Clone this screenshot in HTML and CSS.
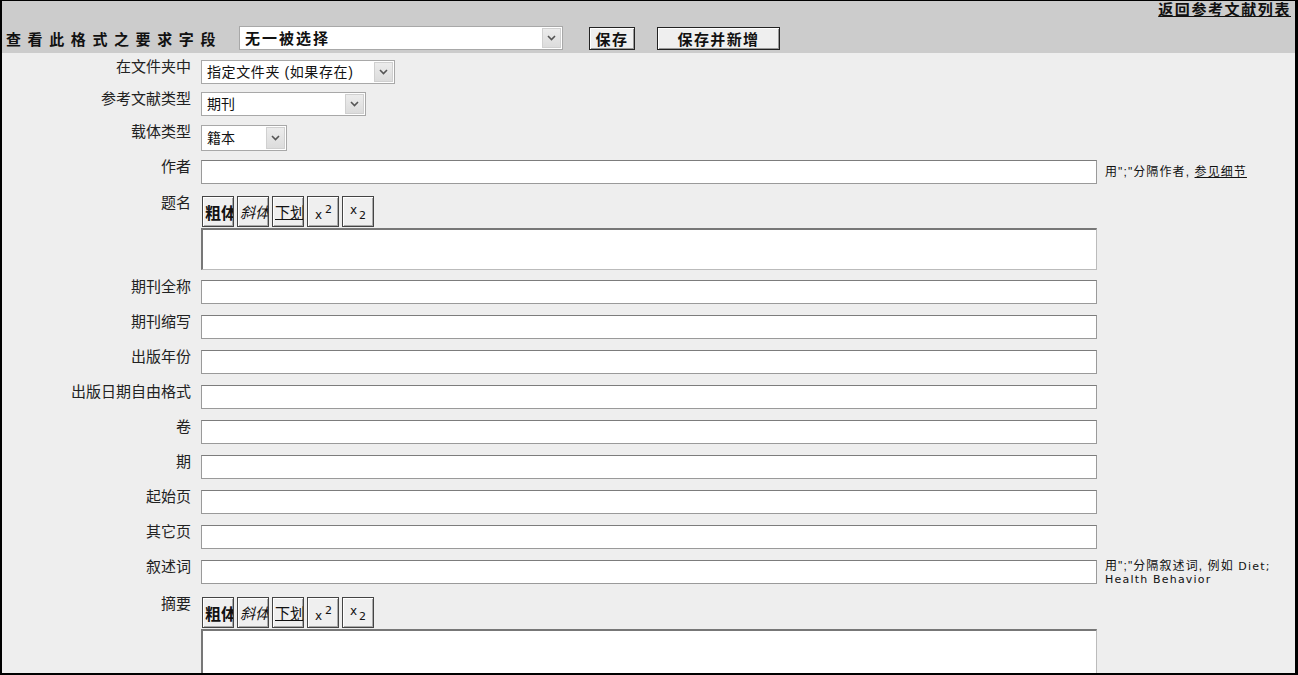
FILE: index.html
```html
<!DOCTYPE html>
<html>
  <head>
    <meta charset="utf-8" />
    <title>编辑参考文献</title>
    <link rel="stylesheet" href="styles.css">
  </head>
  <body>
    <div class="page">
      <div class="header">
        <div class="header-top">
          <a href="#" class="back-link">返回参考文献列表</a>
        </div>
        <div class="header-bar">
          <span class="header-title">查看此格式之要求字段</span>
          <span class="select select-fields">
            <select>
              <option>无一被选择</option>
            </select>
            <span class="select-arrow"><svg width="9" height="6" viewBox="0 0 9 6"><path d="M1 1 L4.5 4.5 L8 1" fill="none" stroke="#555" stroke-width="1.6"/></svg></span>
          </span>
          <button type="button" class="btn btn-save">保存</button>
          <button type="button" class="btn btn-save-new">保存并新增</button>
        </div>
      </div>

      <form class="form">
        <div class="row row-folder">
          <label>在文件夹中</label>
          <div class="field">
            <span class="select select-folder">
              <select>
                <option>指定文件夹 (如果存在)</option>
              </select>
              <span class="select-arrow"><svg width="9" height="6" viewBox="0 0 9 6"><path d="M1 1 L4.5 4.5 L8 1" fill="none" stroke="#555" stroke-width="1.6"/></svg></span>
            </span>
          </div>
        </div>

        <div class="row row-type">
          <label>参考文献类型</label>
          <div class="field">
            <span class="select select-type">
              <select>
                <option>期刊</option>
              </select>
              <span class="select-arrow"><svg width="9" height="6" viewBox="0 0 9 6"><path d="M1 1 L4.5 4.5 L8 1" fill="none" stroke="#555" stroke-width="1.6"/></svg></span>
            </span>
          </div>
        </div>

        <div class="row row-medium">
          <label>载体类型</label>
          <div class="field">
            <span class="select select-medium">
              <select>
                <option>籍本</option>
              </select>
              <span class="select-arrow"><svg width="9" height="6" viewBox="0 0 9 6"><path d="M1 1 L4.5 4.5 L8 1" fill="none" stroke="#555" stroke-width="1.6"/></svg></span>
            </span>
          </div>
        </div>

        <div class="row row-author">
          <label>作者</label>
          <div class="field"><input type="text" /></div>
          <div class="note note-bottom">用";"分隔作者, <a href="#">参见细节</a></div>
        </div>

        <div class="row row-rich">
          <label>题名</label>
          <div class="field">
            <div class="toolbar">
              <button type="button" class="tool tool-bold">粗体</button>
              <button type="button" class="tool tool-italic">斜体</button>
              <button type="button" class="tool tool-underline">下划线</button>
              <button type="button" class="tool tool-script"><span class="base-low">x</span><span class="up">2</span></button>
              <button type="button" class="tool tool-script"><span class="base-high">x</span><span class="down">2</span></button>
            </div>
            <textarea class="rich-text"></textarea>
          </div>
        </div>

        <div class="row row-after-rich">
          <label>期刊全称</label>
          <div class="field"><input type="text" /></div>
        </div>
        <div class="row">
          <label>期刊缩写</label>
          <div class="field"><input type="text" /></div>
        </div>
        <div class="row">
          <label>出版年份</label>
          <div class="field"><input type="text" /></div>
        </div>
        <div class="row">
          <label>出版日期自由格式</label>
          <div class="field"><input type="text" /></div>
        </div>
        <div class="row">
          <label>卷</label>
          <div class="field"><input type="text" /></div>
        </div>
        <div class="row">
          <label>期</label>
          <div class="field"><input type="text" /></div>
        </div>
        <div class="row">
          <label>起始页</label>
          <div class="field"><input type="text" /></div>
        </div>
        <div class="row">
          <label>其它页</label>
          <div class="field"><input type="text" /></div>
        </div>
        <div class="row">
          <label>叙述词</label>
          <div class="field"><input type="text" /></div>
          <div class="note">用";"分隔叙述词, 例如 <span class="latin">Diet;</span><br /><span class="latin">Health Behavior</span></div>
        </div>

        <div class="row row-abstract">
          <label>摘要</label>
          <div class="field">
            <div class="toolbar">
              <button type="button" class="tool tool-bold">粗体</button>
              <button type="button" class="tool tool-italic">斜体</button>
              <button type="button" class="tool tool-underline">下划线</button>
              <button type="button" class="tool tool-script"><span class="base-low">x</span><span class="up">2</span></button>
              <button type="button" class="tool tool-script"><span class="base-high">x</span><span class="down">2</span></button>
            </div>
            <textarea class="rich-text rich-text-tall"></textarea>
          </div>
        </div>
      </form>
    </div>
  </body>
</html>
```

FILE: styles.css
```css
body {
  margin: 0;
  padding: 0;
  font-family: "Liberation Sans", "Noto Sans CJK SC", sans-serif;
  color: #111;
  background: #eee;
}

.page {
  width: 1298px;
  height: 675px;
  box-sizing: border-box;
  border: 2px solid #000;
  border-top-width: 1px;
  border-right-width: 3px;
  background: #eee;
  overflow: hidden;
}

/* grey bar on top */
.header {
  height: 52px;
  background: #ccc;
}

.header-top {
  height: 18px;
  display: flex;
  justify-content: flex-end;
  padding-right: 4px;
}

.back-link {
  font-size: 15px;
  line-height: 17px;
  font-weight: bold;
  letter-spacing: 1.6px;
  color: #111;
  text-decoration: underline;
}

.header-bar {
  display: flex;
  align-items: center;
  padding-top: 7px;
  padding-left: 4px;
}

.header-title {
  width: 233px;
  font-size: 15px;
  font-weight: bold;
  letter-spacing: 6.6px;
  white-space: nowrap;
}

.select {
  position: relative;
  display: inline-block;
}

.select select {
  -webkit-appearance: none;
  appearance: none;
  display: block;
  width: 100%;
  height: 100%;
  box-sizing: border-box;
  margin: 0;
  padding: 0 0 0 5px;
  border: 1px solid #a8a8a8;
  background: #fff;
  font-family: "Liberation Sans", "Noto Sans CJK SC", sans-serif;
  font-size: 14px;
  color: #111;
}

.select-arrow {
  position: absolute;
  top: 2px;
  right: 2px;
  bottom: 2px;
  width: 19px;
  box-sizing: border-box;
  border: 1px solid #d0d0d0;
  background: linear-gradient(#ececec, #dcdcdc);
  display: flex;
  align-items: center;
  justify-content: center;
  pointer-events: none;
}

.select-fields {
  width: 324px;
  height: 24px;
}

.select-fields select {
  font-size: 15px;
  font-weight: bold;
  letter-spacing: 2px;
}

.btn {
  height: 23px;
  box-sizing: border-box;
  padding: 0;
  border: 1px solid #222;
  box-shadow: inset 1px 1px #fff, inset -1px -1px #999;
  background: #efefef;
  font-family: "Liberation Sans", "Noto Sans CJK SC", sans-serif;
  font-size: 15px;
  font-weight: bold;
  letter-spacing: 1.4px;
  color: #111;
  cursor: pointer;
}

.btn-save {
  width: 46px;
  margin-left: 26px;
}

.btn-save-new {
  width: 123px;
  margin-left: 22px;
}

/* form rows */
.form {
  display: flex;
  flex-direction: column;
}

.row {
  display: grid;
  grid-template-columns: 189px 896px 1fr;
  column-gap: 10px;
  margin-top: 11px;
}

.row-folder {
  margin-top: 7px;
}

.row-type {
  margin-top: 8px;
}

.row-medium,
.row-author {
  margin-top: 9px;
}

.row-rich {
  margin-top: 12px;
}

.row-after-rich {
  margin-top: 10px;
}

.row-abstract {
  margin-top: 11px;
}

.row label {
  text-align: right;
  font-size: 15px;
  line-height: 16px;
  margin-top: -1px;
  white-space: nowrap;
  color: #222;
}

.field {
  display: flex;
  flex-direction: column;
}

.field input[type="text"] {
  width: 896px;
  height: 24px;
  box-sizing: border-box;
  margin: 0;
  border: 1px solid #9a9a9a;
  border-top-color: #7c7c7c;
  background: #fff;
}

.select-folder {
  width: 194px;
  height: 24px;
}

.select-folder select {
  letter-spacing: 0.6px;
}

.select-type {
  width: 165px;
  height: 24px;
}

.select-medium {
  width: 86px;
  height: 26px;
}

.note {
  margin-left: -2px;
  font-size: 12px;
  line-height: 12px;
  letter-spacing: 1.1px;
  white-space: nowrap;
}

.note a {
  color: #111;
  text-decoration: underline;
}

.note-bottom {
  align-self: end;
  padding-bottom: 6px;
}

.latin {
  font-family: "DejaVu Sans", sans-serif;
  font-size: 11px;
  letter-spacing: 1.2px;
}

/* bold / italic / underline / sup / sub buttons */
.toolbar {
  display: flex;
  gap: 3px;
  padding-left: 1px;
  margin-bottom: 1px;
}

.tool {
  width: 32px;
  height: 31px;
  box-sizing: border-box;
  padding: 0 0 0 2px;
  overflow: hidden;
  white-space: nowrap;
  text-align: left;
  border: 1px solid #444;
  box-shadow: inset 1px 1px #fff, inset -1px -1px #aaa;
  background: #efefef;
  font-family: "Liberation Sans", "Noto Sans CJK SC", sans-serif;
  font-size: 15px;
  color: #111;
  cursor: pointer;
}

.tool-bold {
  font-weight: bold;
  font-size: 16px;
}

.tool-italic {
  font-style: italic;
}

.tool-underline {
  text-decoration: underline;
}

.tool-script {
  display: flex;
  align-items: center;
  padding-left: 7px;
  font-family: "DejaVu Sans", sans-serif;
  font-size: 12px;
  line-height: 12px;
}

.tool-script span {
  display: inline-block;
}

.base-low {
  margin-top: 7px;
}

.up {
  margin-left: 3px;
  margin-bottom: 4px;
  font-size: 11px;
}

.base-high {
  margin-bottom: 4px;
}

.down {
  margin-left: 2px;
  margin-top: 9px;
  font-size: 11px;
}

.rich-text {
  display: block;
  width: 896px;
  height: 42px;
  box-sizing: border-box;
  margin: 0;
  resize: none;
  border: 1px solid #bbb;
  border-top: 2px solid #777;
  border-left: 2px solid #777;
  background: #fff;
}

.rich-text-tall {
  height: 60px;
}
```
